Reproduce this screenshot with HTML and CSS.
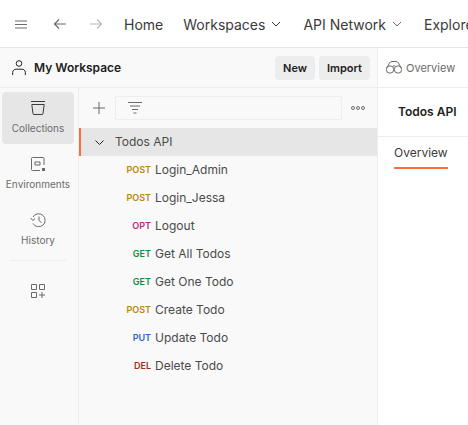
FILE: index.html
```html
<!DOCTYPE html>
<html lang="en">
<head>
    <meta charset="UTF-8">
    <meta name="viewport" content="width=device-width, initial-scale=1.0">
    <title>Todos API</title>
    <link rel="stylesheet" href="styles.css">
</head>
<body>
    <header class="topbar">
        <svg class="icon menu-icon" width="14" height="9" viewBox="0 0 14 9"><path d="M1 1h12M1 4.500h12M1 8h12" stroke="#6b6b6b" fill="none"/></svg>
        <svg class="icon back-icon" width="14" height="12" viewBox="0 0 14 12"><path d="M13 6H1.500M6 1.500 1.500 6 6 10.500" stroke="#6b6b6b" stroke-width="1.200" fill="none"/></svg>
        <svg class="icon forward-icon" width="14" height="12" viewBox="0 0 14 12"><path d="M1 6h11.500M8 1.500 12.500 6 8 10.500" stroke="#b8b8b8" stroke-width="1.200" fill="none"/></svg>
        <nav class="nav">
            <a class="nav-home">Home</a>
            <a class="nav-item">Workspaces
                <svg width="10" height="6" viewBox="0 0 10 6"><path d="M1 1l4 4 4-4" stroke="#3a3a3a" fill="none"/></svg>
            </a>
            <a class="nav-item">API Network
                <svg width="10" height="6" viewBox="0 0 10 6"><path d="M1 1l4 4 4-4" stroke="#6b6b6b" fill="none"/></svg>
            </a>
            <a class="nav-item">Explore</a>
        </nav>
    </header>

    <div class="main">
        <div class="left">
            <div class="workspace">
                <div class="workspace-name">
                    <svg width="14" height="16" viewBox="0 0 14 16"><circle cx="7" cy="3.500" r="2.800" stroke="#212121" fill="none"/><path d="M.7 15v-2.500c0-2 1.500-3.300 3.300-3.300h6c1.800 0 3.300 1.300 3.300 3.300V15" stroke="#212121" fill="none"/></svg>
                    My Workspace
                </div>
                <div class="workspace-btns">
                    <button class="btn">New</button>
                    <button class="btn">Import</button>
                </div>
            </div>
            <div class="panes">
                <aside class="sidebar">
                    <div class="side-item active">
                        <svg width="14" height="14" viewBox="0 0 14 14"><path d="M0 .5h14M.8 3.500h12.400L12 12.500a1 1 0 0 1-1 1H3a1 1 0 0 1-1-1z" stroke="#3a3a3a" fill="none"/></svg>
                        <span>Collections</span>
                    </div>
                    <div class="side-item">
                        <svg width="14" height="14" viewBox="0 0 14 14"><path d="M13 8V1.500a1 1 0 0 0-1-1H1.500a1 1 0 0 0-1 1V12.500a1 1 0 0 0 1 1H9M4 5h5v3H4z" stroke="#6b6b6b" fill="none"/><rect x="11" y="11" width="3" height="3" fill="#6b6b6b"/></svg>
                        <span>Environments</span>
                    </div>
                    <div class="side-item">
                        <svg width="16" height="14" viewBox="0 0 16 14"><path d="M3 4A6.500 6.500 0 1 1 3 10.500M.8 5 2.800 7.500 5 5.500M9 3.500V7.500L11.500 9.500" stroke="#6b6b6b" fill="none"/></svg>
                        <span>History</span>
                    </div>
                    <div class="side-rule"></div>
                    <div class="side-add">
                        <svg width="14" height="14" viewBox="0 0 14 14"><path d="M.5.500h5v5h-5zM8.500 .5h5v5h-5zM.5 8.500h5v5h-5zM11 8v6M8 11h6" stroke="#6b6b6b" fill="none"/></svg>
                    </div>
                </aside>
                <section class="tree">
                    <div class="tree-tools">
                        <svg width="12" height="12" viewBox="0 0 12 12"><path d="M6 0v12M0 6h12" stroke="#6b6b6b" fill="none"/></svg>
                        <div class="filter">
                            <svg width="14" height="12" viewBox="0 0 14 12"><path d="M0 .5h14M2 4h10M4 7.500h6M5.500 11h3" stroke="#6b6b6b" fill="none"/></svg>
                        </div>
                        <svg class="more" width="14" height="4" viewBox="0 0 14 4"><circle cx="2" cy="2" r="1.500" stroke="#6b6b6b" fill="none"/><circle cx="7" cy="2" r="1.500" stroke="#6b6b6b" fill="none"/><circle cx="12" cy="2" r="1.500" stroke="#6b6b6b" fill="none"/></svg>
                    </div>
                    <div class="collection">
                        <svg width="9" height="5" viewBox="0 0 9 5"><path d="M.5.500l4 4 4-4" stroke="#212121" fill="none"/></svg>
                        Todos API
                    </div>
                    <div class="req"><span class="method post">POST</span>Login_Admin</div>
                    <div class="req"><span class="method post">POST</span>Login_Jessa</div>
                    <div class="req"><span class="method opt">OPT</span>Logout</div>
                    <div class="req"><span class="method get">GET</span>Get All Todos</div>
                    <div class="req"><span class="method get">GET</span>Get One Todo</div>
                    <div class="req"><span class="method post">POST</span>Create Todo</div>
                    <div class="req"><span class="method put">PUT</span>Update Todo</div>
                    <div class="req"><span class="method del">DEL</span>Delete Todo</div>
                </section>
            </div>
        </div>
        <div class="right">
            <div class="tab-head">
                <svg width="16" height="13" viewBox="0 0 16 13"><circle cx="4" cy="8.500" r="3.700" stroke="#6b6b6b" fill="none"/><circle cx="12" cy="8.500" r="3.700" stroke="#6b6b6b" fill="none"/><path d="M.8 7 3.500 2Q4.500 .5 6 .5h4Q11.500 .5 12.500 2L15.200 7M6.500 5.500 8 4.500l1.500 1" stroke="#6b6b6b" fill="none"/></svg>
                Overview
            </div>
            <div class="doc-title">Todos API</div>
            <div class="doc-tabs"><span class="doc-tab">Overview</span></div>
        </div>
    </div>
</body>
</html>
```

FILE: styles.css
```css
* {
    box-sizing: border-box;
}
html, body {
    height: 100%;
}
body {
    margin: 0;
    overflow: hidden;
    font-family: Inter, "Noto Sans", sans-serif;
    color: #212121;
    background: #fff;
}
svg {
    display: block;
    flex: none;
}
.topbar {
    display: flex;
    align-items: center;
    height: 48px;
    padding: 1px 0 0 14px;
    border-bottom: 1px solid #e6e6e6;
    background: #fff;
    white-space: nowrap;
}
.back-icon {
    margin-left: 25px;
}
.forward-icon {
    margin-left: 22px;
}
.nav {
    display: flex;
    align-items: center;
    margin-left: 21px;
    font-size: 14px;
    color: #3a3a3a;
}
.nav-home {
    margin-right: -3px;
}
.nav-item {
    display: flex;
    align-items: center;
    gap: 6px;
    margin-left: 22px;
}
.nav-home + .nav-item {
    margin-left: 23px;
}
.main {
    display: flex;
    height: calc(100% - 48px);
}
.left {
    width: 377px;
    background: #f9f9f9;
}
.workspace {
    display: flex;
    align-items: center;
    justify-content: space-between;
    height: 40px;
    padding: 0 7px 0 12px;
    border-bottom: 1px solid #ededed;
}
.workspace-name {
    display: flex;
    align-items: center;
    gap: 8px;
    font-size: 12px;
    font-weight: 600;
}
.workspace-btns {
    display: flex;
    gap: 4px;
}
.btn {
    height: 24px;
    padding: 0 8px;
    border: none;
    border-radius: 4px;
    background: #ededed;
    color: #212121;
    font-family: inherit;
    font-size: 11px;
    font-weight: 600;
}
.panes {
    display: flex;
    height: calc(100% - 40px);
}
.sidebar {
    width: 79px;
    padding: 4px 4px 0 2px;
    border-right: 1px solid #ededed;
}
.side-item {
    display: flex;
    flex-direction: column;
    align-items: center;
    justify-content: center;
    gap: 7px;
    height: 52px;
    margin-bottom: 4px;
    padding-bottom: 2px;
    border-radius: 4px;
    font-size: 10px;
    color: #6b6b6b;
}
.side-item.active {
    background: #e6e6e6;
}
.side-rule {
    width: 56px;
    height: 1px;
    margin: 0 auto;
    background: #ededed;
}
.side-add {
    display: flex;
    justify-content: center;
    margin-top: 23px;
}
.tree {
    flex: 1;
}
.tree-tools {
    display: flex;
    align-items: center;
    height: 40px;
    padding-left: 14px;
}
.filter {
    display: flex;
    align-items: center;
    width: 227px;
    height: 24px;
    margin-left: 10px;
    padding-left: 12px;
    border: 1px solid #ededed;
    border-radius: 2px;
}
.more {
    margin-left: 9px;
}
.collection {
    display: flex;
    align-items: center;
    gap: 11px;
    height: 28px;
    padding: 0 0 2px 14px;
    border-left: 2px solid #ff6c37;
    background: #e6e6e6;
    font-size: 12px;
    color: #4a4a4a;
}
.collection svg {
    margin-top: 2px;
}
.req {
    display: flex;
    align-items: center;
    height: 28px;
    padding-bottom: 2px;
    font-size: 12px;
    color: #4a4a4a;
}
.method {
    width: 72px;
    margin-right: 4px;
    text-align: right;
    font-size: 9px;
    font-weight: 600;
}
.post { color: #b8860b; }
.get { color: #0a8f45; }
.opt { color: #c0267f; }
.put { color: #1f66cc; }
.del { color: #a82a20; }
.right {
    flex: 1;
    border-left: 1px solid #ededed;
    background: #fff;
}
.tab-head {
    display: flex;
    align-items: center;
    gap: 4px;
    height: 40px;
    padding-left: 8px;
    border-bottom: 1px solid #ededed;
    font-size: 11px;
    color: #6b6b6b;
}
.doc-title {
    display: flex;
    align-items: center;
    height: 49px;
    padding: 0 0 2px 20px;
    border-bottom: 1px solid #ededed;
    font-size: 12px;
    font-weight: 600;
}
.doc-tabs {
    display: flex;
    padding: 8px 0 0 16px;
}
.doc-tab {
    height: 24px;
    border-bottom: 2px solid #ff6c37;
    font-size: 12px;
    color: #3a3a3a;
}
```
